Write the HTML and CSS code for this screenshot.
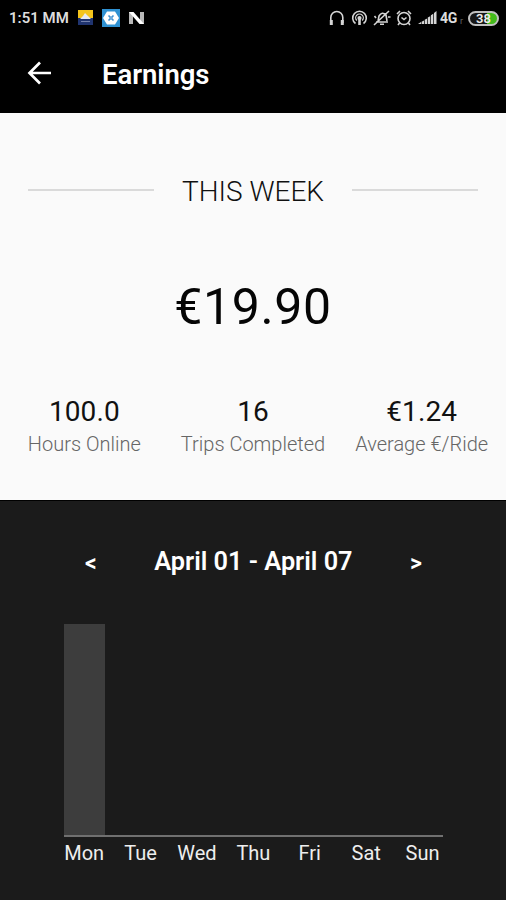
FILE: index.html
```html
<!DOCTYPE html>
<html lang="en">
<head>
<meta charset="utf-8">
<title>Earnings</title>
<link rel="stylesheet" href="styles.css">
</head>
<body>
<div class="status">
  <span class="clock">1:51 MM</span>
  <svg class="notes" width="70" height="20" viewBox="0 0 70 20">
    <path fill="#f5c51c" d="M1 2h15v9H1z"/><path fill="#20346f" d="M1 10h15v7H1z"/><path fill="#e8eaf0" d="M3 11l3-3 2-3 3 3 3 3z"/><path stroke="#8995bd" stroke-width=".8" d="M4 13.5h9"/>
    <path fill="#2f91d2" d="M25 1h18v18H25z"/><path fill="#fff" d="M30 3.500h8l4 6.500-4 6.500h-8L26 10z"/><path fill="none" stroke="#3d8fd0" stroke-width="1.600" d="M31.500 7.500l5 5m0-5l-5 5"/><circle cx="34" cy="10" r="1.700" fill="#6eabdc"/>
    <path fill="#b8b8b8" d="M52 4h4v12h-4zM63 4h4v12h-4z"/><path fill="#fff" d="M52 4h4.500L67 16h-4.500z"/>
  </svg>
  <span class="space"></span>
  <svg class="system" width="90" height="20" viewBox="0 0 90 20" fill="none" stroke="#d5d5d5" stroke-width="1.6">
    <path d="M2.800 15V9.500a6 6 0 0 1 12 0V15"/><path stroke-width="3" d="M3.300 12v5M14.300 12v5"/>
    <path d="M27.500 15.500a6.800 6.800 0 1 1 8 0"/><path stroke-width="1.300" d="M28.800 12.500a3.800 3.800 0 1 1 5.400 0"/><circle cx="31.500" cy="10" r="1.300" fill="#d5d5d5"/><path stroke-width="2.600" d="M31.500 11v6"/>
    <path d="M48 14h12M50 13l1-5q3-5 7-1l1 6M46 17L61 3M52 16.300h4M46.500 8l1.500 2M60 9h2.500"/>
    <circle cx="76" cy="10.500" r="6"/><path d="M69 6l3-3M80 3l3 3M71.500 15l-1.500 2M80.500 15l1.500 2M73.500 9.500l2.500 2 2.500-2"/>
  </svg>
  <svg class="signal" width="19" height="20" viewBox="0 0 19 20" fill="#d5d5d5"><path d="M0 16l3-2v2zM3.600 13.700l2.400-1.200V16H3.600zM6.700 11.700l2.400-1.300V16H6.700zM9.800 9.500l2.400-1.300V16H9.800zM12.900 7.200l2.400-1.400V16h-2.400zM16 5l2.500-2v13H16z"/></svg>
  <span class="network">4G</span><span class="tick">r</span>
  <span class="battery">38</span>
</div>
<header class="bar">
  <svg class="back" width="26" height="26" viewBox="0 0 26 26" fill="none" stroke="#fff" stroke-width="2.700"><path d="M25 13H3.500M14 2.500L3.500 13 14 23.500"/></svg>
  <h1>Earnings</h1>
</header>
<main class="summary">
  <div class="period"><i></i><h2>THIS WEEK</h2><i></i></div>
  <div class="total">€19.90</div>
  <div class="stats">
    <div><b>100.0</b><span>Hours Online</span></div>
    <div><b>16</b><span>Trips Completed</span></div>
    <div><b>€1.24</b><span>Average €/Ride</span></div>
  </div>
</main>
<section class="week">
  <div class="range"><span class="step">&lt;</span><span class="dates">April 01 - April 07</span><span class="step">&gt;</span></div>
  <div class="chart"><div class="column"></div></div>
  <div class="days"><span>Mon</span><span>Tue</span><span>Wed</span><span>Thu</span><span>Fri</span><span>Sat</span><span>Sun</span></div>
</section>
</body>
</html>
```
FILE: styles.css
```css
* { box-sizing: border-box; }
body { margin: 0; width: 506px; height: 900px; overflow: hidden; background: #1b1b1b; font-family: Roboto, "Liberation Sans", sans-serif; color: #fff; }
h1, h2 { margin: 0; }
svg { display: block; flex: none; }
.status { display: flex; align-items: center; height: 36px; padding: 0 7px 0 9px; background: #000; }
.clock { flex: none; width: 67px; font-size: 15px; font-weight: 600; color: #ddd; white-space: nowrap; }
.notes { margin: -1px 0 0 1px; }
.space { flex: 1; }
.signal { margin-right: 3px; }
.network { flex: none; width: 18px; font-size: 14px; font-weight: 700; letter-spacing: -.3px; color: #ddd; }
.tick { flex: none; width: 10px; padding: 5px 0 0 2px; font-size: 9px; color: #666; }
.battery { flex: none; width: 31px; height: 15px; border: 2px solid #c0c0c0; border-radius: 8px; background: linear-gradient(90deg, #171717 0 62%, #43ba1c 62%); font-size: 13px; font-weight: 600; line-height: 11px; text-align: center; color: #eee; }
.bar { display: flex; align-items: center; height: 77px; padding: 0 0 3px 26px; background: #000; }
.bar h1 { margin-left: 50px; padding-top: 4px; font-size: 27.5px; font-weight: 600; line-height: 32px; letter-spacing: -.05px; }
.summary { height: 387px; padding-top: 60px; background: #fafafa; color: #111; }
.period { display: flex; align-items: center; justify-content: space-between; height: 37px; padding: 0 28px; }
.period i { width: 126px; height: 2px; margin-bottom: 4px; background: #dadada; }
.period h2 { font-size: 28px; font-weight: 350; line-height: 36px; padding-top: 1px; white-space: nowrap; }
.total { margin-top: 67px; text-align: center; font-size: 50px; line-height: 60px; letter-spacing: .6px; color: #050505; }
.stats { display: grid; grid-template-columns: repeat(3, 1fr); margin-top: 58px; text-align: center; }
.stats b, .stats span { display: block; white-space: nowrap; }
.stats b { font-size: 28px; font-weight: 400; line-height: 34px; letter-spacing: .1px; }
.stats span { font-size: 20px; font-weight: 350; line-height: 30px; color: #666; }
.week { height: 400px; padding: 42px 63px 0 64px; border-top: 1px solid #000; }
.range { display: flex; justify-content: space-between; align-items: center; height: 36px; padding: 0 21px; font-weight: 600; }
.dates { font-size: 25.300px; white-space: nowrap; }
.step { padding-top: 4px; font-size: 23px; }
.chart { display: flex; align-items: flex-end; height: 258px; border-bottom: 2px solid #707070; }
.column { width: 41px; height: 211px; background: #3d3d3d; }
.days { display: grid; grid-template-columns: repeat(7, 56.4px); width: 395px; margin: 2px 0 0 -8px; text-align: center; font-size: 20px; line-height: 28px; color: #eee; }
```
